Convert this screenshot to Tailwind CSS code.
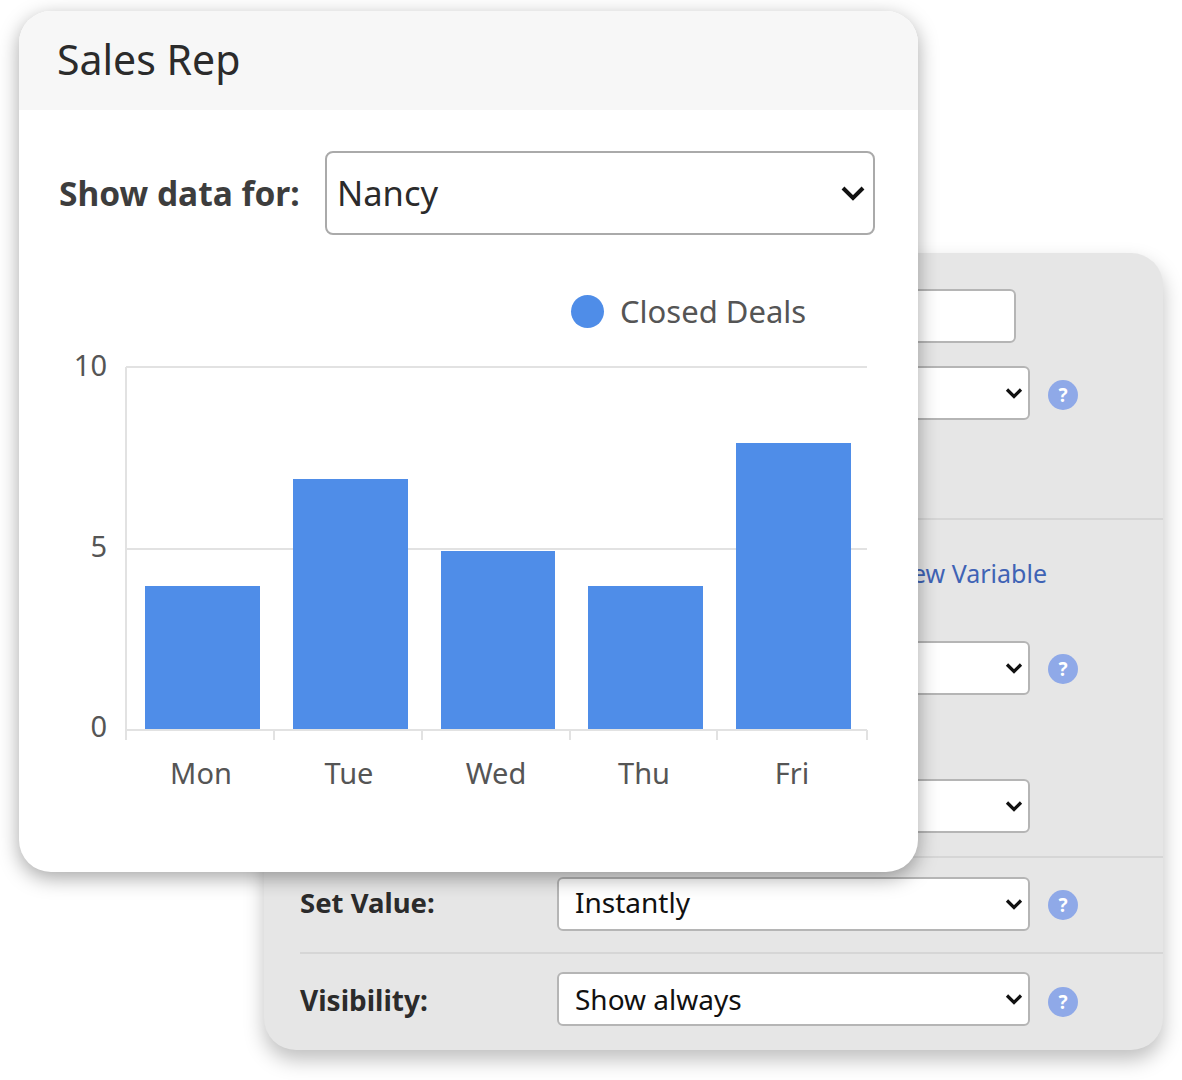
<!DOCTYPE html>
<html lang="en">
<head>
    <meta charset="UTF-8">
    <title>Sales Rep</title>
    <script src="https://cdn.jsdelivr.net/npm/@tailwindcss/browser@4"></script>
</head>
<body class="bg-white font-['Noto_Sans',sans-serif]">
    <div class="relative w-[1182px] h-[1080px] overflow-hidden">

        <!-- Back panel -->
        <div class="absolute left-[264px] top-[253px] w-[899px] h-[797px] bg-[#e6e6e6] rounded-[32px] shadow-[0_10px_20px_rgba(0,0,0,0.25)] pt-[36px] text-[#2b2b2b]">
            <div class="ml-[293px] w-[459px] h-[54px] bg-white border-2 border-[#b5b5b5] rounded-[6px]"></div>

            <div class="flex items-center mt-[23px] pl-[36px]">
                <div class="w-[257px]"></div>
                <div class="w-[473px] h-[54px] bg-white border-2 border-[#b5b5b5] rounded-[6px] flex items-center justify-end pr-[4px]">
                    <svg class="w-[20px] h-[14px]" viewBox="0 0 20 14" fill="none" stroke="#111" stroke-width="3.2"><path d="M3 3.5l7 7 7-7"/></svg>
                </div>
                <div class="ml-[18px] mt-[4px] w-[30px] h-[30px] rounded-full bg-[#8fa9e8] text-white text-[19px] font-bold flex items-center justify-center">?</div>
            </div>

            <div class="ml-[36px] mt-[98px] h-[2px] bg-[#d6d6d6]"></div>

            <div class="pl-[629px] mt-[36px] h-[36px] flex items-center text-[25px] text-[#3f63b5] whitespace-nowrap">New Variable</div>

            <div class="flex items-center mt-[49px] pl-[36px]">
                <div class="w-[257px]"></div>
                <div class="w-[473px] h-[54px] bg-white border-2 border-[#b5b5b5] rounded-[6px] flex items-center justify-end pr-[4px]">
                    <svg class="w-[20px] h-[14px]" viewBox="0 0 20 14" fill="none" stroke="#111" stroke-width="3.2"><path d="M3 3.5l7 7 7-7"/></svg>
                </div>
                <div class="ml-[18px] mt-[2px] w-[30px] h-[30px] rounded-full bg-[#8fa9e8] text-white text-[19px] font-bold flex items-center justify-center">?</div>
            </div>

            <div class="flex items-center mt-[84px] pl-[36px]">
                <div class="w-[257px]"></div>
                <div class="w-[473px] h-[54px] bg-white border-2 border-[#b5b5b5] rounded-[6px] flex items-center justify-end pr-[4px]">
                    <svg class="w-[20px] h-[14px]" viewBox="0 0 20 14" fill="none" stroke="#111" stroke-width="3.2"><path d="M3 3.5l7 7 7-7"/></svg>
                </div>
            </div>

            <div class="ml-[36px] mt-[23px] h-[2px] bg-[#d6d6d6]"></div>

            <div class="flex items-center mt-[19px] pl-[36px]">
                <div class="w-[257px] pb-[2px] text-[27.5px] font-bold">Set Value:</div>
                <div class="w-[473px] h-[54px] bg-white border-2 border-[#b5b5b5] rounded-[6px] flex items-center justify-between pl-[16px] pr-[4px] text-[28px] text-[#111]">
                    <span class="pb-[4px]">Instantly</span>
                    <svg class="w-[20px] h-[14px]" viewBox="0 0 20 14" fill="none" stroke="#111" stroke-width="3.2"><path d="M3 3.5l7 7 7-7"/></svg>
                </div>
                <div class="ml-[18px] mt-[2px] w-[30px] h-[30px] rounded-full bg-[#8fa9e8] text-white text-[19px] font-bold flex items-center justify-center">?</div>
            </div>

            <div class="ml-[36px] mt-[21px] h-[2px] bg-[#d6d6d6]"></div>

            <div class="flex items-center mt-[18px] pl-[36px]">
                <div class="w-[257px] pt-[2px] text-[28px] font-bold">Visibility:</div>
                <div class="w-[473px] h-[54px] bg-white border-2 border-[#b5b5b5] rounded-[6px] flex items-center justify-between pl-[16px] pr-[4px] text-[28px] text-[#111]">
                    <span>Show always</span>
                    <svg class="w-[20px] h-[14px]" viewBox="0 0 20 14" fill="none" stroke="#111" stroke-width="3.2"><path d="M3 3.5l7 7 7-7"/></svg>
                </div>
                <div class="ml-[18px] mt-[6px] w-[30px] h-[30px] rounded-full bg-[#8fa9e8] text-white text-[19px] font-bold flex items-center justify-center">?</div>
            </div>
        </div>

        <!-- Front card -->
        <div class="absolute left-[19px] top-[11px] w-[899px] h-[861px] bg-white rounded-[32px] shadow-[0_6px_20px_rgba(0,0,0,0.35)] overflow-hidden">
            <div class="h-[99px] bg-[#f7f7f7] pl-[38px] pb-[2px] flex items-center text-[41px] text-[#2b2b2b]">Sales Rep</div>

            <div class="flex items-center mt-[41px] pl-[40px]">
                <div class="w-[266px] text-[33.5px] font-bold text-[#3d3d3d] whitespace-nowrap">Show data for:</div>
                <div class="w-[550px] h-[84px] border-2 border-[#aaaaaa] rounded-[8px] flex items-center justify-between pl-[10px] pr-[6px] text-[34.5px] text-[#2b2b2b]">
                    <span>Nancy</span>
                    <svg class="w-[28px] h-[20px]" viewBox="0 0 28 20" fill="none" stroke="#111" stroke-width="4"><path d="M4 5l10 10 10-10"/></svg>
                </div>
            </div>

            <div class="flex items-center mt-[53px] pl-[552px]">
                <div class="w-[33px] h-[33px] rounded-full bg-[#4f8de8]"></div>
                <div class="ml-[16px] text-[31px] text-[#555555] whitespace-nowrap">Closed Deals</div>
            </div>

            <!-- Chart, coordinates relative to the card -->
            <svg class="mt-[24px] block overflow-visible" width="899" height="450" viewBox="0 0 899 450" font-family="Noto Sans, sans-serif" fill="#555555">
                <g stroke="#e2e2e2" stroke-width="2" fill="none">
                    <path d="M107 8H848M107 190H848M107 371H848"/>
                    <path d="M107 8V381M255 371V381M403 371V381M551 371V381M698 371V381M848 371V381"/>
                </g>
                <g fill="#4f8de8">
                    <rect x="126" y="227" width="115" height="143"/>
                    <rect x="274" y="120" width="115" height="250"/>
                    <rect x="422" y="192" width="114" height="178"/>
                    <rect x="569" y="227" width="115" height="143"/>
                    <rect x="717" y="84" width="115" height="286"/>
                </g>
                <g font-size="29" text-anchor="end">
                    <text x="88" y="17">10</text>
                    <text x="88" y="198">5</text>
                    <text x="88" y="378">0</text>
                </g>
                <g font-size="29" text-anchor="middle">
                    <text x="182" y="425">Mon</text>
                    <text x="330" y="425">Tue</text>
                    <text x="477" y="425">Wed</text>
                    <text x="625" y="425">Thu</text>
                    <text x="773" y="425">Fri</text>
                </g>
            </svg>
        </div>
    </div>
</body>
</html>
